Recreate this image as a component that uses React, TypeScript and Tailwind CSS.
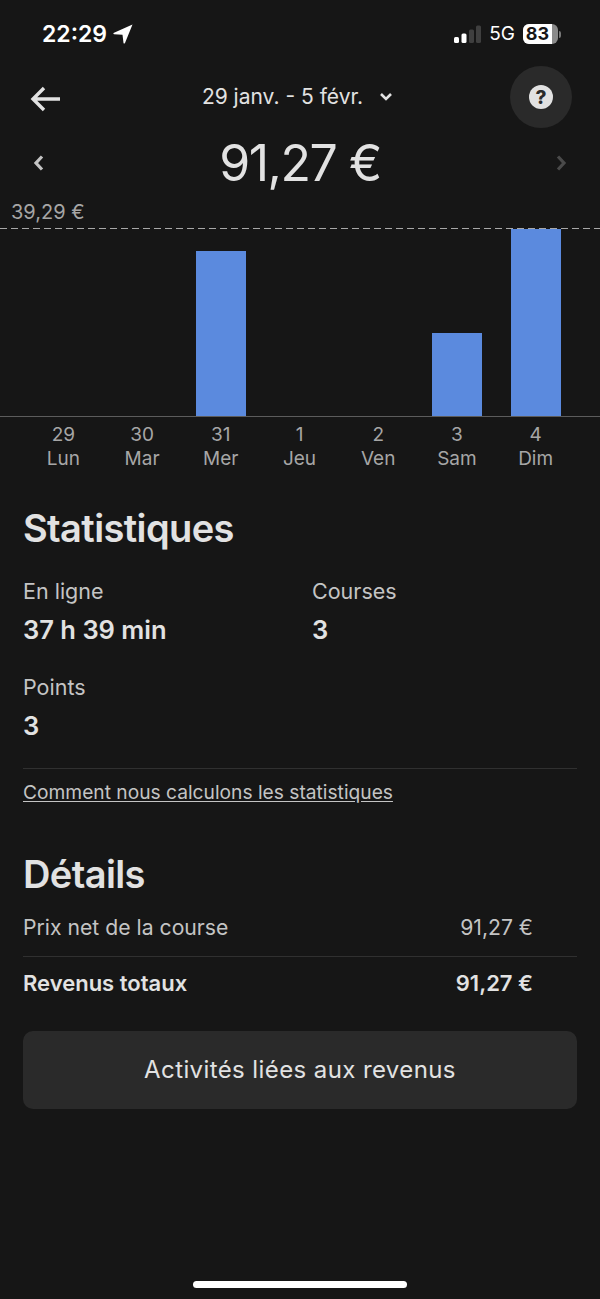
const days = [
  { n: "29", d: "Lun", h: 0 },
  { n: "30", d: "Mar", h: 0 },
  { n: "31", d: "Mer", h: 165 },
  { n: "1", d: "Jeu", h: 0 },
  { n: "2", d: "Ven", h: 0 },
  { n: "3", d: "Sam", h: 83 },
  { n: "4", d: "Dim", h: 187 },
];

function StatusBar() {
  return (
    <div className="flex h-[66px] items-start justify-between pl-[42px] pr-[39px] pt-[20px] text-white">
      <div className="flex items-center gap-[6px]">
        <span className="text-[23px] font-semibold leading-[28px]">22:29</span>
        <svg width="20" height="20" viewBox="0 0 20 20" fill="#fff">
          <path d="M19.5 0.5 L0.5 9 Q0 10 1 10.2 L9.5 10.8 L10.5 19 Q11 20 12 19 Z" />
        </svg>
      </div>
      <div className="flex items-center pt-[3px]">
        <svg width="27" height="19" viewBox="0 0 27 19" className="mr-[8px]">
          <rect x="0" y="12" width="5" height="6" rx="1.5" fill="#fff" />
          <rect x="7.5" y="8.5" width="5" height="9.5" rx="1.5" fill="#fff" />
          <rect x="15" y="4.5" width="5" height="13.5" rx="1.5" fill="#3f3f3f" />
          <rect x="22" y="0.5" width="5" height="17.5" rx="1.5" fill="#3f3f3f" />
        </svg>
        <span className="mr-[8px] text-[19px] font-normal leading-[22px]">5G</span>
        <div className="relative flex h-[20px] w-[35px] items-center overflow-hidden rounded-[6px] bg-[#8a8a8a]">
          <div className="flex h-full w-[29px] items-center justify-center bg-white text-[18px] font-bold leading-none text-[#161616]">
            83
          </div>
        </div>
        <div className="ml-[1px] h-[7px] w-[2px] rounded-r-full bg-[#777]" />
      </div>
    </div>
  );
}

function Bar({ h }: { h: number }) {
  return <div className="w-[50px] bg-[#5b8ade]" style={{ height: h }} />;
}

function Chart() {
  return (
    <div>
      <div className="pl-[11px] text-[20px] leading-[24px] text-[#a6a6a6]">39,29 €</div>
      <div className="mt-[4px] h-[1px] bg-[repeating-linear-gradient(to_right,#a8a8a8_0,#a8a8a8_7px,transparent_7px,transparent_11px)]" />
      <div className="grid h-[188px] grid-cols-7 border-b border-[#5c5c5c] pl-[24px] pr-[25px]">
        {days.map((day) => (
          <div key={day.n} className="flex items-end justify-center">
            {day.h > 0 && <Bar h={day.h} />}
          </div>
        ))}
      </div>
      <div className="mt-[6px] grid grid-cols-7 pl-[24px] pr-[25px] text-[19px] leading-[24px] text-[#a6a6a6]">
        {days.map((day) => (
          <div key={day.n} className="text-center">
            <div>{day.n}</div>
            <div>{day.d}</div>
          </div>
        ))}
      </div>
    </div>
  );
}

function Stat({ label, value }: { label: string; value: string }) {
  return (
    <div>
      <div className="text-[21.5px] leading-[26px] text-[#c4c4c4]">{label}</div>
      <div className="mt-[11px] text-[25.5px] font-semibold leading-[30px]">{value}</div>
    </div>
  );
}

export default function App() {
  return (
    <div className="flex h-[1299px] w-[600px] flex-col overflow-hidden bg-[#161616] font-['Inter',sans-serif] text-[#e2e2e2]">
      <StatusBar />

      <div className="flex h-[62px] items-center justify-between pl-[30px] pr-[28px]">
        <svg width="30" height="26" viewBox="0 0 30 26" fill="none" stroke="#e2e2e2" strokeWidth="3.4" className="mt-[3px]">
          <path d="M30 13 H3 M14 2 L3 13 L14 24" />
        </svg>
        <div className="ml-[24px] flex items-center gap-[17px] text-[21px] leading-[24px]">
          <span>29 janv. - 5 févr.</span>
          <svg width="12" height="8" viewBox="0 0 12 8" fill="none" stroke="#e2e2e2" strokeWidth="2.6">
            <path d="M1 1 L6 6 L11 1" />
          </svg>
        </div>
        <div className="flex h-[62px] w-[62px] items-center justify-center rounded-full bg-[#2a2a2a]">
          <div className="flex h-[24px] w-[24px] items-center justify-center rounded-full bg-[#e2e2e2] text-[19px] font-extrabold leading-none text-[#2a2a2a]">
            ?
          </div>
        </div>
      </div>

      <div className="flex h-[70px] items-center justify-between pl-[33px] pr-[33px]">
        <svg width="11" height="16" viewBox="0 0 11 16" fill="none" stroke="#c4c4c4" strokeWidth="3.2">
          <path d="M9 1.5 L3 8 L9 14.5" />
        </svg>
        <div className="text-[50px] font-normal leading-[60px] tracking-[-1.5px]">91,27 €</div>
        <svg width="11" height="16" viewBox="0 0 11 16" fill="none" stroke="#4a4a4a" strokeWidth="3.2">
          <path d="M2 1.5 L8 8 L2 14.5" />
        </svg>
      </div>

      <div className="mt-[2px]">
        <Chart />
      </div>

      <div className="mt-[35px] px-[23px]">
        <h2 className="text-[38px] font-semibold leading-[44px] tracking-[-0.6px]">Statistiques</h2>

        <div className="mt-[28px] grid grid-cols-[289px_1fr] gap-y-[29px]">
          <Stat label="En ligne" value="37 h 39 min" />
          <Stat label="Courses" value="3" />
          <Stat label="Points" value="3" />
        </div>

        <div className="mt-[27px] border-t border-[#303030] pt-[9px]">
          <span className="text-[19.2px] leading-[28px] text-[#c4c4c4] underline underline-offset-2">
            Comment nous calculons les statistiques
          </span>
        </div>

        <h2 className="mt-[46px] text-[38px] font-semibold leading-[44px] tracking-[-0.6px]">Détails</h2>

        <div className="mt-[4px] flex h-[57px] items-center justify-between border-b border-[#303030] pr-[44px] text-[21.2px] text-[#c4c4c4]">
          <span>Prix net de la course</span>
          <span>91,27 €</span>
        </div>
        <div className="flex h-[53px] items-center justify-between pr-[44px] text-[22px] font-semibold">
          <span>Revenus totaux</span>
          <span>91,27 €</span>
        </div>

        <div className="mt-[21px] flex h-[78px] items-center justify-center rounded-[10px] bg-[#2a2a2a] text-[24px] font-normal tracking-[0.4px]">
          Activités liées aux revenus
        </div>
      </div>

      <div className="mt-auto flex justify-center pb-[11px]">
        <div className="h-[7px] w-[214px] rounded-full bg-white" />
      </div>
    </div>
  );
}
